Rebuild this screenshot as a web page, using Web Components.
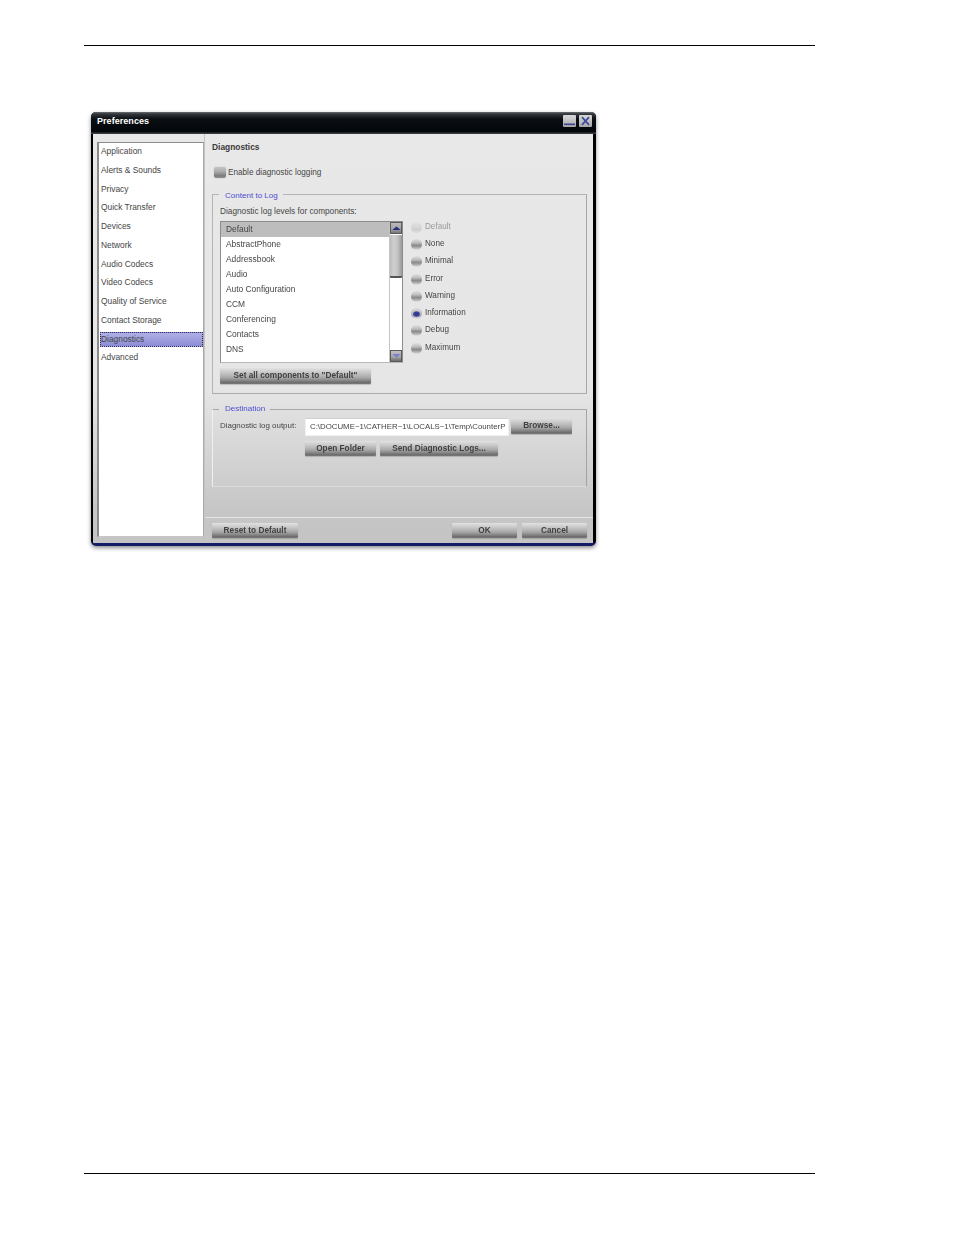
<!DOCTYPE html>
<html><head><meta charset="utf-8"><title>Preferences</title>
<style>html,body{margin:0;padding:0;background:#fff}</style></head>
<body>
<doc-page>
<pref-window heading="Preferences">
  <pref-nav slot="nav">
    <nav-item>Application</nav-item><nav-item>Alerts &amp; Sounds</nav-item><nav-item>Privacy</nav-item>
    <nav-item>Quick Transfer</nav-item><nav-item>Devices</nav-item><nav-item>Network</nav-item>
    <nav-item>Audio Codecs</nav-item><nav-item>Video Codecs</nav-item><nav-item>Quality of Service</nav-item>
    <nav-item>Contact Storage</nav-item><nav-item selected>Diagnostics</nav-item><nav-item>Advanced</nav-item>
  </pref-nav>
  <diag-panel>
    <check-box slot="check">Enable diagnostic logging</check-box>
    <group-box slot="content" legend="Content to Log" kind="a">
      <log-levels></log-levels>
      <gel-button w="151" h="16" nudge style="margin-top:5px">Set all components to "Default"</gel-button>
    </group-box>
    <group-box slot="dest" legend="Destination" kind="b">
      <dest-form></dest-form>
    </group-box>
    <gel-button slot="reset" w="86" h="15">Reset to Default</gel-button>
    <gel-button slot="ok" w="65" h="15">OK</gel-button>
    <gel-button slot="cancel" w="65" h="15">Cancel</gel-button>
  </diag-panel>
</pref-window>
</doc-page>
<script>
const FONT = '"Liberation Sans",Arial,sans-serif';
function def(name, html, init){
  const t=document.createElement('template'); t.innerHTML=html;
  customElements.define(name,class extends HTMLElement{
    constructor(){super();this.attachShadow({mode:'open'}).appendChild(t.content.cloneNode(true));}
    connectedCallback(){ if(init) init.call(this,this.shadowRoot); }
  });
}
def('doc-page',`<style>
:host{display:flex;flex-direction:column;height:1235px;box-sizing:border-box;padding:45px 139px 61px 84px;font:8.4px/10px ${FONT};color:#454545}
.rule{height:1px;background:#000;flex:none}
.body{flex:1;padding:66px 0 0 7px}
</style><div class="rule"></div><div class="body"><slot></slot></div><div class="rule"></div>`);

def('pref-window',`<style>
:host{display:block;width:505px;height:434px;box-sizing:border-box;border-radius:5px;background:#000;
 box-shadow:0 2px 4px rgba(0,0,0,.45);display:flex;flex-direction:column;overflow:hidden;
 border-bottom:3px solid #141c66;filter:blur(.35px)}
.bar{height:22px;flex:none;display:flex;align-items:center;padding:0 4px 4px 6px;box-sizing:border-box;
 background:linear-gradient(#6a6e72 0,#33373b 2px,#0b0f13 7px,#02050a 20px,#3a3d40 21px,#3a3d40 22px);
 color:#fff;font-weight:bold;font-size:9px;letter-spacing:.05px}
.t{flex:1}
.ctl{display:flex;gap:3px}
svg{display:block}
.frame{flex:1;display:flex;margin:0 3px 0 2px;min-height:0;background:linear-gradient(#e8e8e8 0,#e6e6e6 62%,#c6c6c6 92%,#c4c4c4 100%)}
.nav{flex:none;padding:8px 0 6px 4px;display:flex}
.main{flex:1;display:flex;min-width:0}
</style>
<div class="bar"><span class="t" id="t"></span><span class="ctl">
<svg width="13" height="12" viewBox="0 0 13 12"><defs><linearGradient id="g" x1="0" y1="0" x2="0" y2="1"><stop offset="0" stop-color="#d8d8d8"/><stop offset="1" stop-color="#a8a8a8"/></linearGradient></defs><rect width="13" height="12" rx="1" fill="url(#g)"/><rect x="1" y="8.5" width="11" height="1.6" fill="#3a4694"/></svg>
<svg width="13" height="12" viewBox="0 0 13 12"><defs><linearGradient id="g2" x1="0" y1="0" x2="0" y2="1"><stop offset="0" stop-color="#d8d8d8"/><stop offset="1" stop-color="#a8a8a8"/></linearGradient></defs><rect width="13" height="12" rx="1" fill="url(#g2)"/><path d="M3 2.2 L10 9.8 M10 2.2 L3 9.8" stroke="#3a4a9c" stroke-width="1.7"/></svg>
</span></div>
<div class="frame"><div class="nav"><slot name="nav"></slot></div><div class="main"><slot></slot></div></div>`,
function(r){r.getElementById('t').textContent=this.getAttribute('heading');});

def('pref-nav',`<style>
:host{display:block;width:107px;box-sizing:border-box;background:#fff;border:1px solid #8c8c8c;border-right-color:#aaa;border-bottom-color:#c8c8c8;border-left-width:2px}
</style><slot></slot>`);

def('nav-item',`<style>
:host{display:block;height:18.75px;padding:1px 0 0 1px;box-sizing:border-box}
div{height:15px;box-sizing:border-box;border:1px solid transparent;line-height:13px;white-space:nowrap}
:host([selected]) div{background:linear-gradient(#b0b0e6,#8c8cd4);border:1px dotted #2c2c60;margin-top:.6px}
</style><div><slot></slot></div>`);

def('diag-panel',`<style>
:host{display:flex;flex-direction:column;flex:1;min-width:0;border-left:1px solid #c4c4c4;box-sizing:border-box}
.pad{padding:8px 6px 0 7px;display:flex;flex-direction:column}
h2{margin:0;font:bold 8.4px/10px ${FONT};color:#3a3a3a}
.chk{margin:15px 0 9px 2px}
.foot{margin-top:auto;border-top:1px solid #e4e4e4;height:26px;box-sizing:border-box;padding:5px 6px 0 7px;display:flex;gap:5px}
.sp{flex:1}
::slotted([slot=dest]){margin-top:10px}
</style>
<div class="pad"><h2>Diagnostics</h2><div class="chk"><slot name="check"></slot></div><slot name="content"></slot><slot name="dest"></slot></div>
<div class="foot"><slot name="reset"></slot><span class="sp"></span><slot name="ok"></slot><slot name="cancel"></slot></div>`);

def('check-box',`<style>
:host{display:flex;align-items:center;gap:2px;height:11px;font-size:8.2px}
i{width:12px;height:11px;border-radius:2px;background:linear-gradient(#c4c4c4,#adadad 40%,#7c7c7c 80%,#909090);box-shadow:0 0 1.5px #bbb}
</style><i></i><span><slot></slot></span>`);

def('group-box',`<style>
:host{display:block}
fieldset{margin:0;border:1px solid #b4b4b4;border-right-color:#a8a8a8;border-bottom-color:#aaa;padding:6px 7px 9px 7px;min-width:0}
:host([kind=b]) fieldset{padding:4px 7px 30px 7px;border-left-color:#f0f0f0;border-bottom-color:#dcdcdc;border-top-color:#a8a8a8;border-right-color:#a4a4a4}
legend{margin-left:-1px;padding:4px 5px 0 6px;line-height:10px;color:#4e4ed0;font-size:8.05px}
:host([kind=b]) legend{padding-top:0}
</style><fieldset><legend id="l"></legend><slot></slot></fieldset>`,
function(r){r.getElementById('l').textContent=this.getAttribute('legend');});

def('gel-button',`<style>
:host{display:flex;flex:none;box-sizing:border-box;border-radius:1px;font:bold 8.25px/10px ${FONT};color:#3f3f3f;
 background:linear-gradient(#e2e2e2 0,#c6c6c6 30%,#a8a8a8 60%,#6c6c6c 92%,#7a7a7a 100%);
 box-shadow:0 1px 1px rgba(90,90,90,.3);align-items:center;justify-content:center;white-space:nowrap}
:host([nudge]){padding-bottom:1px}
</style><slot></slot>`,
function(){this.style.width=this.getAttribute('w')+'px';this.style.height=this.getAttribute('h')+'px';});

def('log-levels',`<style>
:host{display:block}
.lbl{height:10px;margin-bottom:4px;font-size:8.25px}
.row{display:flex;gap:8px}
.rad{margin-top:-3px;display:block;font-size:8.15px}
</style><div class="lbl">Diagnostic log levels for components:</div>
<div class="row"><list-box></list-box><div class="rad" id="r"></div></div>`,
function(r){
  const c=r.getElementById('r'); if(c.children.length) return;
  ['Default','None','Minimal','Error','Warning','Information','Debug','Maximum'].forEach((n,i)=>{
    const e=document.createElement('radio-opt'); e.textContent=n;
    if(i==0)e.setAttribute('disabled',''); if(i==5)e.setAttribute('checked',''); c.appendChild(e);
  });
});

def('radio-opt',`<style>
:host{display:flex;align-items:center;gap:3px;height:17.3px}
i{width:11px;height:11px;border-radius:50%;box-sizing:border-box;margin-top:1px;background:linear-gradient(#dcdcdc 0,#c4c4c4 30%,#8a8a8a 60%,#b4b4b4 82%,#e4e4e4 100%)}
:host([disabled]) i{background:linear-gradient(#e2e2e2,#d6d6d6 50%,#cecece 70%,#e2e2e2)}
:host([disabled]){color:#9a9a9a}
:host([checked]) i{background:radial-gradient(ellipse 4px 3.2px at 50% 55%,#2e3690 0,#3c4498 70%,transparent 100%),linear-gradient(#dcdcdc 0,#c4c4c4 35%,#a8a8b4 70%,#e4e4e4 100%)}
</style><i></i><span><slot></slot></span>`);

def('list-box',`<style>
:host{display:flex;width:183px;height:142px;box-sizing:border-box;background:#fff;border:1px solid #8c8c8c;border-bottom:1px solid #b8b8b8;flex:none}
.items{flex:1;min-width:0;overflow:hidden}
.it{height:15px;padding-left:5px;line-height:14.5px}
.it.sel{background:#bdbdbd}
.sb{width:13px;flex:none;display:flex;flex-direction:column;border-left:1px solid #c4c4c4;background:#fff;box-sizing:border-box}
.btn{height:12px;flex:none;background:linear-gradient(#bcbcbc,#a0a0a0 60%,#777);border:1px solid #5a5a5a;box-sizing:border-box;display:flex;align-items:center;justify-content:center}
.btn.d{background:linear-gradient(#c0c0c0,#a4a4a4 60%,#6c6c6c)}
.th{height:43px;margin-top:1px;flex:none;background:linear-gradient(90deg,#bcbcbc,#cfcfcf 30%,#c6c6c6 60%,#9a9a9a),#bbb;border-bottom:2px solid #555;box-sizing:border-box;border-radius:1px}
.sp{flex:1}
svg{display:block}
</style><div class="items" id="i"></div><div class="sb">
<div class="btn"><svg width="9" height="6"><path d="M0.5 5 L4.5 1.5 L8.5 5Z" fill="#1f2a80"/></svg></div>
<div class="th"></div><div class="sp"></div>
<div class="btn d"><svg width="9" height="6"><path d="M0.5 1 L4.5 4.5 L8.5 1Z" fill="#7a7ad8"/></svg></div></div>`,
function(r){
  const c=r.getElementById('i'); if(c.children.length) return;
  ['Default','AbstractPhone','Addressbook','Audio','Auto Configuration','CCM','Conferencing','Contacts','DNS'].forEach((n,i)=>{
    const d=document.createElement('div'); d.className='it'+(i==0?' sel':''); d.textContent=n; c.appendChild(d);
  });
});

def('dest-form',`<style>
:host{display:block}
.r1{display:flex;align-items:flex-start}
.l{width:85px;flex:none;line-height:16px;white-space:nowrap;font-size:7.95px}
.inp{width:204px;height:18px;flex:none;box-sizing:border-box;border:1px solid #f2f2f2;border-top-color:#cfcfcf;background:#fff;padding-left:4px;line-height:16px;white-space:nowrap;margin-right:2px;font-size:7.85px}
.r2{display:flex;gap:4px;margin:5px 0 0 85px}
</style><div class="r1"><span class="l">Diagnostic log output:</span><span class="inp">C:\\DOCUME~1\\CATHER~1\\LOCALS~1\\Temp\\CounterP</span><gel-button w="61" h="16">Browse...</gel-button></div>
<div class="r2"><gel-button w="71" h="15">Open Folder</gel-button><gel-button w="118" h="15">Send Diagnostic Logs...</gel-button></div>`);
</script>
</body></html>
